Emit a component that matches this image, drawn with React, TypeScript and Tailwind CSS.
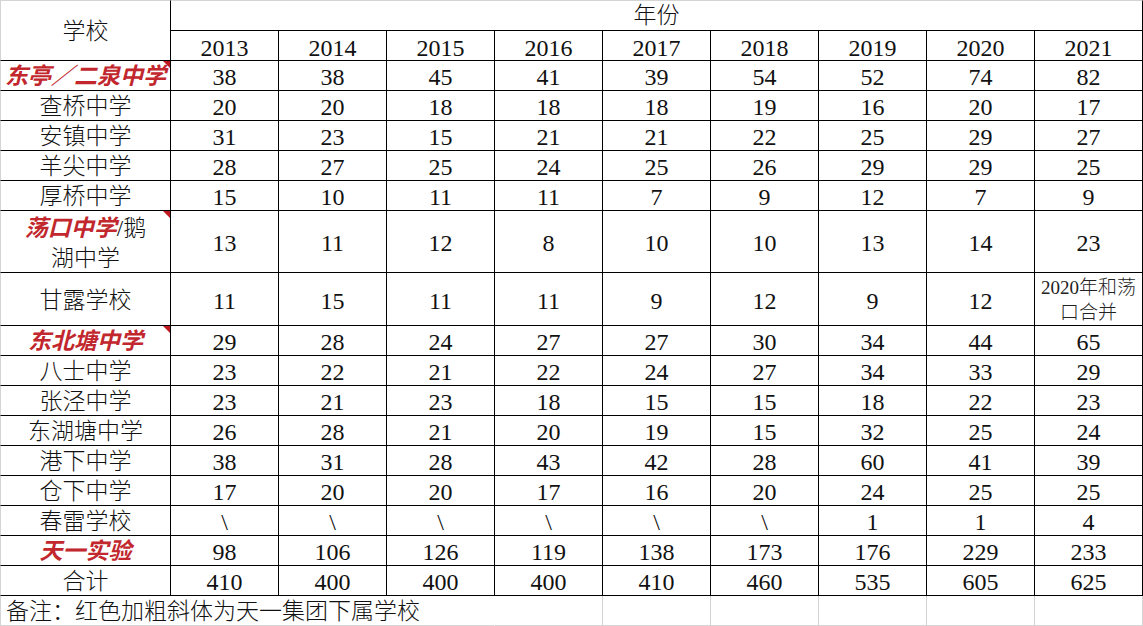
const years = ["2013", "2014", "2015", "2016", "2017", "2018", "2019", "2020", "2021"];

type Row = { name: React.ReactNode; red?: boolean; flag?: boolean; h: string; vals: React.ReactNode[] };

const rows: Row[] = [
  { name: "东亭／二泉中学", red: true, flag: true, h: "h-[30px]", vals: ["38", "38", "45", "41", "39", "54", "52", "74", "82"] },
  { name: "查桥中学", h: "h-[30px]", vals: ["20", "20", "18", "18", "18", "19", "16", "20", "17"] },
  { name: "安镇中学", h: "h-[30px]", vals: ["31", "23", "15", "21", "21", "22", "25", "29", "27"] },
  { name: "羊尖中学", h: "h-[30px]", vals: ["28", "27", "25", "24", "25", "26", "29", "29", "25"] },
  { name: "厚桥中学", h: "h-[30px]", vals: ["15", "10", "11", "11", "7", "9", "12", "7", "9"] },
  {
    name: (
      <span className="block text-center leading-[30px]">
        <span className="font-bold italic text-[#c1272d]">荡口中学</span>/鹅
        <br />
        湖中学
      </span>
    ),
    flag: true,
    h: "h-[62px]",
    vals: ["13", "11", "12", "8", "10", "10", "13", "14", "23"],
  },
  {
    name: "甘露学校",
    h: "h-[53px]",
    vals: [
      "11", "15", "11", "11", "9", "12", "9", "12",
      <span key="m" className="block pb-[2px] text-center text-[19px] font-light leading-[25px] text-[#222]">
        2020年和荡
        <br />
        口合并
      </span>,
    ],
  },
  { name: "东北塘中学", red: true, flag: true, h: "h-[30px]", vals: ["29", "28", "24", "27", "27", "30", "34", "44", "65"] },
  { name: "八士中学", h: "h-[30px]", vals: ["23", "22", "21", "22", "24", "27", "34", "33", "29"] },
  { name: "张泾中学", h: "h-[30px]", vals: ["23", "21", "23", "18", "15", "15", "18", "22", "23"] },
  { name: "东湖塘中学", h: "h-[30px]", vals: ["26", "28", "21", "20", "19", "15", "32", "25", "24"] },
  { name: "港下中学", h: "h-[30px]", vals: ["38", "31", "28", "43", "42", "28", "60", "41", "39"] },
  { name: "仓下中学", h: "h-[30px]", vals: ["17", "20", "20", "17", "16", "20", "24", "25", "25"] },
  { name: "春雷学校", h: "h-[30px]", vals: ["\\", "\\", "\\", "\\", "\\", "\\", "1", "1", "4"] },
  { name: "天一实验", red: true, h: "h-[30px]", vals: ["98", "106", "126", "119", "138", "173", "176", "229", "233"] },
  { name: "合计", h: "h-[30px]", vals: ["410", "400", "400", "400", "410", "460", "535", "605", "625"] },
];

const font = { fontFamily: "'Liberation Serif', 'Noto Sans CJK SC', serif" };

function Flag() {
  return (
    <span className="absolute right-0 top-0 h-0 w-0 border-l-[7px] border-t-[7px] border-l-transparent border-t-[#c0181f]" />
  );
}

export default function App() {
  return (
    <div className="h-[626px] w-[1143px] overflow-hidden bg-white text-[23px] text-[#111]" style={font}>
      <div className="grid grid-cols-[171px_repeat(9,108px)]">
        <div className="row-span-2 flex h-[61px] items-center justify-center border-l border-t border-r border-b border-l-[#d4d4d4] border-t-[#d4d4d4] border-r-black border-b-black pt-[4px] font-light">
          学校
        </div>
        <div className="col-span-9 flex h-[31px] items-center justify-center border-t border-r border-b border-t-[#d4d4d4] border-r-black border-b-black pt-[2px] font-light">
          年份
        </div>
        {years.map((y) => (
          <div key={y} className="flex h-[30px] items-center justify-center border-r border-b border-black pt-[4px] text-[24px]">
            {y}
          </div>
        ))}

        {rows.map((r, i) => (
          <div key={i} className="contents">
            <div
              className={`relative flex ${r.h} items-center justify-center whitespace-nowrap border-l border-r border-b border-l-[#d4d4d4] border-r-black border-b-black pt-[4px] ${
                r.red ? "font-bold italic text-[#c1272d]" : "font-light"
              }`}
            >
              {r.name}
              {r.flag && <Flag />}
            </div>
            {r.vals.map((v, j) => (
              <div key={j} className={`flex ${r.h} items-center justify-center border-r border-b border-black pt-[3px] text-[24px]`}>
                {v}
              </div>
            ))}
          </div>
        ))}

        <div className="col-span-4 flex h-[30px] items-center whitespace-nowrap border-l border-r border-b border-[#d4d4d4] pl-[5px] pt-[3px] font-light [border-right-color:transparent]">
          备注：红色加粗斜体为天一集团下属学校
        </div>
        {[0, 1, 2, 3, 4, 5].map((k) => (
          <div key={k} className="h-[30px] border-r border-b border-[#d4d4d4]" />
        ))}
      </div>
    </div>
  );
}
